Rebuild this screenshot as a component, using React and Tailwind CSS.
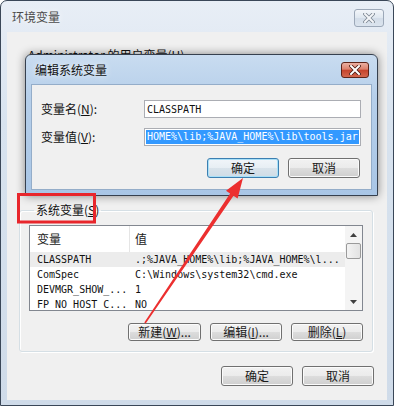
import React from 'react';

const cjk = "font-['Noto_Sans_CJK_SC',sans-serif]";
const mono = "font-['DejaVu_Sans_Mono','Noto_Sans_CJK_SC',monospace]";

const btnGray =
  'border-[#707070] bg-[linear-gradient(#f2f2f2,#ebebeb_50%,#dddddd_50%,#cfcfcf)] shadow-[inset_0_0_0_1px_#fbfbfb]';
const btnDefault =
  'border-[#3c7fb1] bg-[linear-gradient(#f1f5f9,#e7eef4_50%,#d9e3eb_50%,#cfdce6)] shadow-[inset_0_0_0_1px_#a8e0f8]';

const Button = ({ children, isDefault = false, className = '' }) => (
  <div
    className={`flex items-center justify-center rounded-[3px] border text-[12px] leading-none text-[#1a1a1a] ${cjk} ${
      isDefault ? btnDefault : btnGray
    } ${className}`}
  >
    {children}
  </div>
);

const CloseGlyph = ({ stroke = '#ffffff', outline = '#4a1a12', size = 8 }) => (
  <svg width={size + 4} height={size + 2} viewBox="0 0 12 10">
    <path d="M2 1 L10 9 M10 1 L2 9" stroke={outline} strokeWidth="3.6" strokeLinecap="square" />
    <path d="M2 1 L10 9 M10 1 L2 9" stroke={stroke} strokeWidth="2" strokeLinecap="square" />
  </svg>
);

const rows = [
  ['CLASSPATH', '.;%JAVA_HOME%\\lib;%JAVA_HOME%\\l...', true],
  ['ComSpec', 'C:\\Windows\\system32\\cmd.exe', false],
  ['DEVMGR_SHOW_...', '1', false],
  ['FP_NO_HOST_C...', 'NO', false],
];

export default function App() {
  return (
    <div className="relative w-[394px] h-[406px] overflow-hidden bg-white">
      {/* 环境变量 window (inactive) */}
      <div className="w-full h-full flex flex-col border border-[#3a4758] rounded-t-[7px] bg-[linear-gradient(#e8eef6,#d8e3ef_30%,#cfdbe9)]">
        <div className="h-[31px] flex items-center justify-between pl-[11px] pr-[9px]">
          <span className={`text-[12px] text-[#4b4b4b] [text-shadow:0_0_6px_#fff] ${cjk}`}>环境变量</span>
          <div className="mt-[2px] w-[30px] h-[18px] flex items-center justify-center rounded-[3px] border border-[#9ca8b8] bg-[linear-gradient(#f3f6fa,#dfe7f0_50%,#d3dde9_50%,#dbe4ee)]">
            <CloseGlyph stroke="#f4f6f9" outline="#7d8793" />
          </div>
        </div>

        <div className="flex-1 mx-[6px] mb-[5px] bg-[#f0f0f0] flex flex-col">
          <div className={`mt-[15px] ml-[21px] text-[12px] leading-[16px] text-[#111] ${cjk}`}>
            Administrator 的用户变量(<span className="underline">U</span>)
          </div>

          <fieldset className="mt-[139px] ml-[12px] w-[354px] border border-[#d5dfe5] rounded-[3px] shadow-[inset_1px_1px_0_#fff,1px_1px_0_#fff] pl-[9px] pr-[9px] pt-[7px] pb-[10px]">
            <legend className={`ml-[5px] px-[2px] text-[12px] leading-[16px] text-[#111] ${cjk}`}>
              系统变量(<span className="underline">S</span>)
            </legend>

            <div className="h-[86px] border border-[#828790] bg-white flex overflow-hidden">
              <div className="flex-1 flex flex-col">
                <div className={`h-[26px] shrink-0 flex items-center text-[12px] text-[#222] ${cjk}`}>
                  <div className="w-[100px] h-full flex items-center pl-[7px] border-r border-[#e5e5e5]">变量</div>
                  <div className="pl-[5px]">值</div>
                </div>
                {rows.map(([name, value, selected]) => (
                  <div
                    key={name}
                    className={`h-[15px] shrink-0 flex items-center text-[10px] text-[#111] ${mono} ${
                      selected ? 'bg-[#ececec]' : ''
                    }`}
                  >
                    <div className="w-[100px] pl-[7px] whitespace-nowrap overflow-hidden">{name}</div>
                    <div className="pl-[5px] whitespace-nowrap overflow-hidden">{value}</div>
                  </div>
                ))}
              </div>
              <div className="w-[17px] shrink-0 bg-[#f4f4f4] flex flex-col items-center">
                <div className="h-[17px] w-full flex items-center justify-center">
                  <svg width="7" height="4" viewBox="0 0 7 4">
                    <path d="M0 4 L3.5 0 L7 4 Z" fill="#404040" />
                  </svg>
                </div>
                <div className="w-[15px] h-[16px] rounded-[2px] border border-[#9a9a9a] bg-[linear-gradient(90deg,#f3f3f3,#e2e2e2)]" />
                <div className="flex-1" />
                <div className="h-[17px] w-full flex items-center justify-center">
                  <svg width="7" height="4" viewBox="0 0 7 4">
                    <path d="M0 0 L7 0 L3.5 4 Z" fill="#404040" />
                  </svg>
                </div>
              </div>
            </div>

            <div className="mt-[12px] flex justify-end gap-[9px]">
              <Button className="w-[73px] h-[18px]">
                新建(<span className="underline">W</span>)...
              </Button>
              <Button className="w-[72px] h-[18px]">
                编辑(<span className="underline">I</span>)...
              </Button>
              <Button className="w-[72px] h-[18px]">
                删除(<span className="underline">L</span>)
              </Button>
            </div>
          </fieldset>

          <div className="mt-[14px] pr-[13px] flex justify-end gap-[9px]">
            <Button className="w-[72px] h-[20px]">确定</Button>
            <Button className="w-[72px] h-[20px]">取消</Button>
          </div>
        </div>
      </div>

      {/* 编辑系统变量 dialog (active, on top) */}
      <div className="absolute left-[25px] top-[54px] w-[353px] h-[142px] flex flex-col border border-[#36404e] rounded-t-[6px] bg-[linear-gradient(#c9dcf0,#b6cfea_30%,#a9c6e6)] shadow-[0_0_10px_rgba(0,0,0,0.45)]">
        <div className="h-[29px] flex items-center justify-between pl-[9px] pr-[8px]">
          <span className={`text-[12px] text-[#111] [text-shadow:0_0_7px_#fff] ${cjk}`}>编辑系统变量</span>
          <div className="w-[28px] h-[16px] flex items-center justify-center rounded-[3px] border border-[#5e2419] bg-[linear-gradient(#eab0a2,#dc806c_45%,#c5432c_50%,#d3674e)]">
            <CloseGlyph />
          </div>
        </div>
        <div className="flex-1 mx-[5px] mb-[5px] bg-[#f0f0f0] border border-[#94adc9] pt-[15px] pl-[9px] pr-[10px]">
          <div className="flex items-center">
            <div className={`w-[103px] text-[12px] text-[#111] ${cjk}`}>
              变量名(<span className="underline">N</span>):
            </div>
            <div className={`flex-1 h-[18px] border border-[#abadb3] bg-white flex items-center pl-[2px] text-[10px] text-[#111] ${mono}`}>
              CLASSPATH
            </div>
          </div>
          <div className="mt-[10px] flex items-center">
            <div className={`w-[103px] text-[12px] text-[#111] ${cjk}`}>
              变量值(<span className="underline">V</span>):
            </div>
            <div className={`flex-1 h-[18px] border border-[#abadb3] bg-white flex items-center pl-[1px] pr-[1px] text-[10px] ${mono}`}>
              <span className="bg-[#3399ff] text-white whitespace-nowrap leading-[14px] px-[1px]">
                HOME%\lib;%JAVA_HOME%\lib\tools.jar
              </span>
            </div>
          </div>
          <div className="mt-[12px] flex justify-end gap-[9px] pr-[1px]">
            <Button isDefault className="w-[72px] h-[20px]">确定</Button>
            <Button className="w-[72px] h-[20px]">取消</Button>
          </div>
        </div>
      </div>

      {/* red annotation: box + arrow */}
      <svg className="absolute left-0 top-0 pointer-events-none" width="394" height="406" viewBox="0 0 394 406">
        <rect x="18.5" y="194.5" width="76" height="27.5" fill="none" stroke="#e8262c" strokeWidth="3" />
        <polygon
          points="144.3,322.6 230.1,193.5 226,190.7 243,178 237.6,198.5 233.5,195.7 145.7,323.4"
          fill="#ec2f2f"
        />
      </svg>
    </div>
  );
}
